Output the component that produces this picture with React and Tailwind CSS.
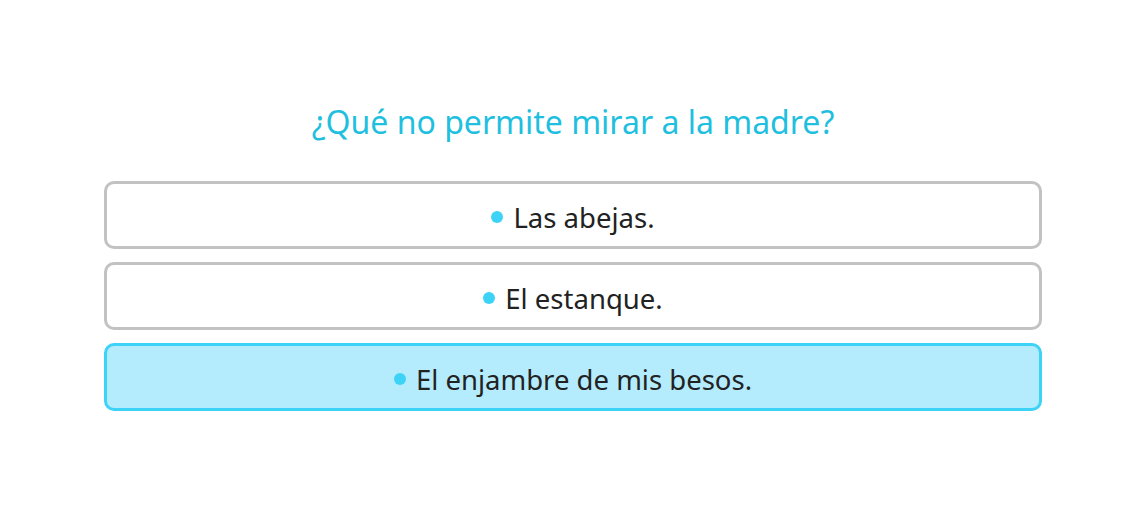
const options = [
  { id: 1, text: "Las abejas." },
  { id: 2, text: "El estanque." },
  { id: 3, text: "El enjambre de mis besos.", selected: true },
];

export default function App() {
  return (
    <div
      className="min-h-screen bg-white pt-[100px]"
      style={{ fontFamily: '"Noto Sans", "Open Sans", sans-serif' }}
    >
      <div className="w-[938px] mx-auto">
        <h1 className="text-center text-[32px] leading-[44px] text-[#1fbfe0] mb-[37px]">
          ¿Qué no permite mirar a la madre?
        </h1>

        <div className="flex flex-col gap-[13px]">
          {options.map((o) => (
            <button
              key={o.id}
              className={`h-[68px] w-full rounded-[10px] border-[3px] pt-[5px] flex items-center justify-center text-[27.5px] text-[#222] ${
                o.selected
                  ? "bg-[#b4ecfe] border-[#3dd3f6]"
                  : "bg-white border-[#c2c2c2]"
              }`}
            >
              <span className="w-[12px] h-[12px] rounded-full bg-[#3dd3f6] mr-[10px] -mt-[2px]" />
              {o.text}
            </button>
          ))}
        </div>
      </div>
    </div>
  );
}
